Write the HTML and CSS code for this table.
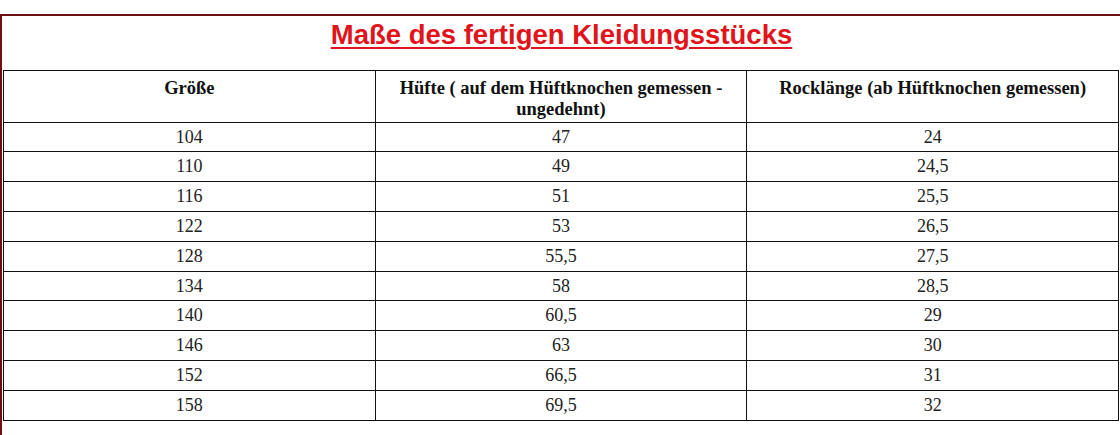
FILE: index.html
```html
<!DOCTYPE html>
<html lang="de">
<head>
<meta charset="utf-8">
<title>Maße des fertigen Kleidungsstücks</title>
<link rel="stylesheet" href="styles.css">
</head>
<body>
<div class="box">
  <h1 class="title">Maße des fertigen Kleidungsstücks</h1>
  <table class="sizes">
    <colgroup><col class="c"><col class="c"><col class="c"></colgroup>
    <thead>
      <tr>
        <th>Größe</th>
        <th>Hüfte ( auf dem Hüftknochen gemessen - ungedehnt)</th>
        <th>Rocklänge (ab Hüftknochen gemessen)</th>
      </tr>
    </thead>
    <tbody>
      <tr><td>104</td><td>47</td><td>24</td></tr>
      <tr><td>110</td><td>49</td><td>24,5</td></tr>
      <tr><td>116</td><td>51</td><td>25,5</td></tr>
      <tr><td>122</td><td>53</td><td>26,5</td></tr>
      <tr><td>128</td><td>55,5</td><td>27,5</td></tr>
      <tr><td>134</td><td>58</td><td>28,5</td></tr>
      <tr><td>140</td><td>60,5</td><td>29</td></tr>
      <tr><td>146</td><td>63</td><td>30</td></tr>
      <tr><td>152</td><td>66,5</td><td>31</td></tr>
      <tr><td>158</td><td>69,5</td><td>32</td></tr>
    </tbody>
  </table>
</div>
</body>
</html>
```

FILE: styles.css
```css
html, body {
  margin: 0;
  padding: 0;
  background: #fff;
  overflow: hidden;
}

body {
  font-family: "Liberation Serif", "Times New Roman", serif;
  color: #1a1a1a;
}

.box {
  margin-top: 14px;
  border-top: 2px solid #6d0f0f;
  border-left: 2px solid #6d0f0f;
  padding: 4px 0 16px 1px;
}

.title {
  margin: 0 0 21px 0;
  text-align: center;
  font-family: "Liberation Sans", Arial, sans-serif;
  font-size: 27.5px;
  font-weight: bold;
  line-height: 29px;
  color: #e0141a;
  text-decoration: underline;
  text-decoration-thickness: 2px;
  text-underline-offset: 3px;
}

.sizes {
  width: 1116px;
  border-collapse: collapse;
  table-layout: fixed;
  font-size: 18px;
}

.sizes .c {
  width: 33.333%;
}

.sizes th,
.sizes td {
  border: 1px solid #111;
  padding: 4px 6px;
  text-align: center;
  line-height: 20.8px;
}

.sizes th {
  vertical-align: top;
  font-size: 18.5px;
  font-weight: bold;
  color: #111;
  padding-top: 7px;
  padding-bottom: 2px;
}

.sizes td {
  color: #222;
}
```
